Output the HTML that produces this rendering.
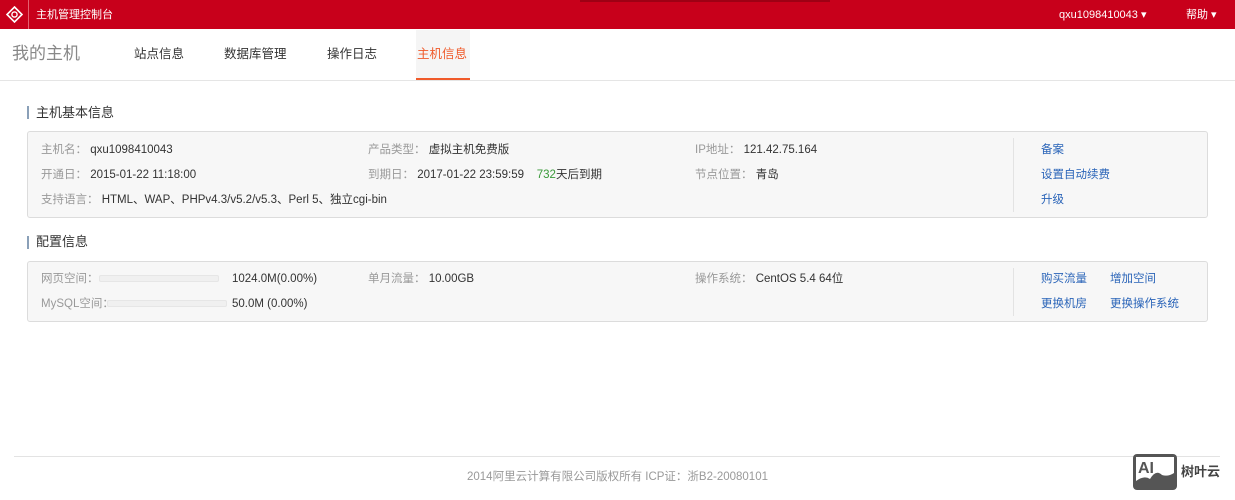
<!DOCTYPE html>
<html><head><meta charset="utf-8"><style>
*{margin:0;padding:0;box-sizing:border-box}
body{width:1235px;height:500px;position:relative;background:#fff;font-family:"Liberation Sans","Noto Sans CJK SC",sans-serif;font-size:11.5px;color:#333;overflow:hidden}
.a{position:absolute;white-space:nowrap;line-height:14px}
.top{position:absolute;left:0;top:0;width:1235px;height:29px;background:#c8001b}
.g{color:#999}
.l{color:#2a64b8}
.box{position:absolute;left:27px;width:1181px;background:#f7f7f7;border:1px solid #dcdcdc;border-radius:3px}
.sep{position:absolute;left:985px;width:1px;background:#e3e3e3}
.bar{position:absolute;width:120px;height:7px;background:#f0f0f0;border:1px solid #e6e6e6;border-radius:2px}
</style></head><body>
<div class="top"></div>
<div style="position:absolute;left:580px;top:0;width:250px;height:2px;background:#9e0014"></div>
<svg style="position:absolute;left:6px;top:6px" width="17" height="17" viewBox="0 0 17 17"><path d="M8.5 1L16 8.5 8.5 16 1 8.5z" fill="none" stroke="#fff" stroke-width="1.6"/><circle cx="8.5" cy="8.5" r="2.6" fill="none" stroke="#fff" stroke-width="1.4"/></svg>
<div style="position:absolute;left:28px;top:0;width:1px;height:29px;background:#e56070"></div>
<div class="a" style="left:36px;top:8px;color:#fff;font-size:11px">主机管理控制台</div>
<div class="a" style="left:1059px;top:8px;color:#fff;font-size:11px">qxu1098410043 ▾</div>
<div class="a" style="left:1186px;top:8px;color:#fff;font-size:11px">帮助 ▾</div>

<div style="position:absolute;left:416px;top:30px;width:54px;height:50px;background:#f5f5f5;border-bottom:2px solid #f05a2a"></div>
<div style="position:absolute;left:0;top:80px;width:1235px;height:1px;background:#e5e5e5"></div>
<div class="a" style="left:12px;top:44px;font-size:17px;line-height:20px;color:#888">我的主机</div>
<div class="a" style="left:134px;top:46px;font-size:12.5px;line-height:16px">站点信息</div>
<div class="a" style="left:224px;top:46px;font-size:12.5px;line-height:16px">数据库管理</div>
<div class="a" style="left:327px;top:46px;font-size:12.5px;line-height:16px">操作日志</div>
<div class="a" style="left:417px;top:46px;font-size:12.5px;line-height:16px;color:#f05a2a">主机信息</div>

<div style="position:absolute;left:27px;top:106px;width:2px;height:13px;background:#8aa0b8"></div>
<div class="a" style="left:36px;top:105px;font-size:13px;line-height:16px">主机基本信息</div>
<div class="box" style="top:131px;height:87px"><div class="sep" style="top:6px;height:74px"></div></div>
<div class="a" style="left:41px;top:143px"><span class="g">主机名：</span> qxu1098410043</div>
<div class="a" style="left:41px;top:168px"><span class="g">开通日：</span> 2015-01-22 11:18:00</div>
<div class="a" style="left:41px;top:193px"><span class="g">支持语言：</span> HTML、WAP、PHPv4.3/v5.2/v5.3、Perl 5、独立cgi-bin</div>
<div class="a" style="left:368px;top:143px"><span class="g">产品类型：</span> 虚拟主机免费版</div>
<div class="a" style="left:368px;top:168px"><span class="g">到期日：</span> 2017-01-22 23:59:59 &nbsp;&nbsp; <span style="color:#3a9a3a">732</span>天后到期</div>
<div class="a" style="left:695px;top:143px"><span class="g">IP地址：</span> 121.42.75.164</div>
<div class="a" style="left:695px;top:168px"><span class="g">节点位置：</span> 青岛</div>
<div class="a l" style="left:1041px;top:143px">备案</div>
<div class="a l" style="left:1041px;top:168px">设置自动续费</div>
<div class="a l" style="left:1041px;top:193px">升级</div>

<div style="position:absolute;left:27px;top:236px;width:2px;height:13px;background:#8aa0b8"></div>
<div class="a" style="left:36px;top:234px;font-size:13px;line-height:16px">配置信息</div>
<div class="box" style="top:261px;height:61px"><div class="sep" style="top:6px;height:48px"></div></div>
<div class="a g" style="left:41px;top:272px">网页空间：</div>
<div class="bar" style="left:99px;top:275px"></div>
<div class="a" style="left:232px;top:272px">1024.0M(0.00%)</div>
<div class="a g" style="left:41px;top:297px">MySQL空间：</div>
<div class="bar" style="left:107px;top:300px"></div>
<div class="a" style="left:232px;top:297px">50.0M (0.00%)</div>
<div class="a" style="left:368px;top:272px"><span class="g">单月流量：</span> 10.00GB</div>
<div class="a" style="left:695px;top:272px"><span class="g">操作系统：</span> CentOS 5.4 64位</div>
<div class="a l" style="left:1041px;top:272px">购买流量</div>
<div class="a l" style="left:1110px;top:272px">增加空间</div>
<div class="a l" style="left:1041px;top:297px">更换机房</div>
<div class="a l" style="left:1110px;top:297px">更换操作系统</div>

<div style="position:absolute;left:14px;top:456px;width:1206px;height:1px;background:#e3e3e3"></div>
<div class="a g" style="left:0;width:1235px;text-align:center;top:470px">2014阿里云计算有限公司版权所有 ICP证：浙B2-20080101</div>

<div style="position:absolute;left:1133px;top:454px;width:44px;height:36px;background:#555;border-radius:4px"></div>
<svg style="position:absolute;left:1136px;top:457px" width="38" height="30" viewBox="0 0 38 30"><rect x="0" y="0" width="38" height="30" fill="#fff"/><text x="2" y="16" font-family="Liberation Sans" font-weight="bold" font-size="16" fill="#555">AI</text><path d="M0 30 L0 24 Q8 18 14 22 Q20 12 26 18 Q32 20 38 16 L38 30z" fill="#555"/></svg>
<div class="a" style="left:1181px;top:464px;font-size:13px;line-height:16px;color:#444;font-weight:bold">树叶云</div>
</body></html>
